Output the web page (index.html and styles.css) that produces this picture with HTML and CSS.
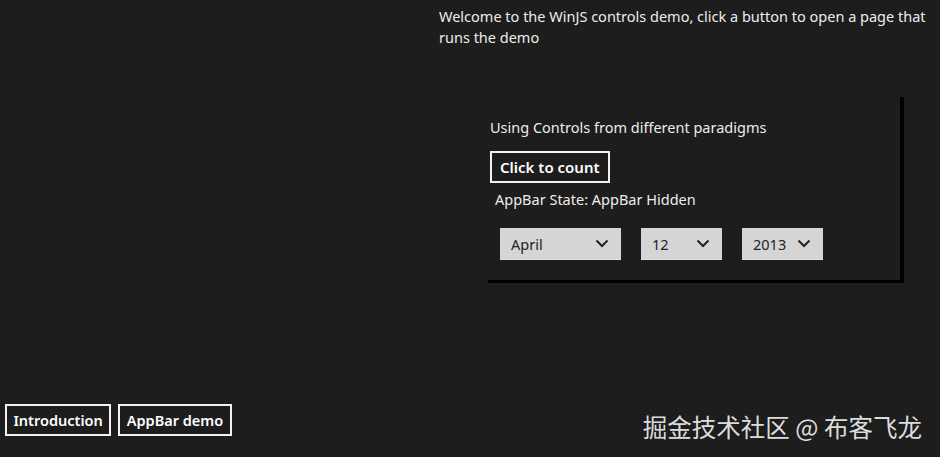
FILE: index.html
```html
<!DOCTYPE html>
<html lang="en">
<head>
  <meta charset="UTF-8" />
  <meta name="viewport" content="width=device-width, initial-scale=1.0"/>
  <title>WinJS Controls Demo</title>
  <link rel="stylesheet" href="styles.css">
</head>
<body>

  <div class="page">
    <main class="content">
      <p class="intro">Welcome to the WinJS controls demo, click a button to open a page that runs the demo</p>

      <section class="panel">
        <p class="panel-title">Using Controls from different paradigms</p>
        <button class="win-button">Click to count</button>
        <p class="state">AppBar State: AppBar Hidden</p>

        <div class="date-picker">
          <div class="select month">
            <span>April</span>
            <svg width="14" height="9" viewBox="0 0 14 9"><path d="M1.5 1.5 L7 7 L12.5 1.5" fill="none" stroke="#222" stroke-width="2"/></svg>
          </div>
          <div class="select">
            <span>12</span>
            <svg width="14" height="9" viewBox="0 0 14 9"><path d="M1.5 1.5 L7 7 L12.5 1.5" fill="none" stroke="#222" stroke-width="2"/></svg>
          </div>
          <div class="select">
            <span>2013</span>
            <svg width="14" height="9" viewBox="0 0 14 9"><path d="M1.5 1.5 L7 7 L12.5 1.5" fill="none" stroke="#222" stroke-width="2"/></svg>
          </div>
        </div>
      </section>
    </main>

    <footer class="appbar">
      <div class="nav">
        <button class="win-button">Introduction</button>
        <button class="win-button">AppBar demo</button>
      </div>
      <div class="watermark">掘金技术社区 @ 布客飞龙</div>
    </footer>
  </div>

</body>
</html>
```

FILE: styles.css
```css
body {
  margin: 0;
  background-color: #1d1d1d;
  color: #ececec;
  font-family: "Noto Sans", "Open Sans", sans-serif;
  font-size: 14.5px;
}

p {
  margin: 0;
}

.page {
  height: 457px;
  display: flex;
  flex-direction: column;
  overflow: hidden;
}

.content {
  flex: 1;
  padding: 6px 0 0 439px;
}

.intro {
  width: 495px;
  line-height: 21px;
}

.panel {
  width: 416px;
  height: 186px;
  margin: 46px 0 0 45px;
  padding: 23px 0 0 6px;
  box-sizing: border-box;
  background-color: #1d1d1d;
  box-shadow: 4px 3px 0 #000;
}

.panel-title {
  line-height: 20px;
}

.win-button {
  font-family: inherit;
  font-size: 15px;
  font-weight: 600;
  color: #fff;
  background: transparent;
  border: 2px solid #f2f2f2;
  height: 32px;
  padding: 0 8px;
  cursor: pointer;
}

.panel .win-button {
  margin-top: 14px;
}

.state {
  margin: 5px 0 0 5px;
  line-height: 22px;
}

.date-picker {
  display: flex;
  gap: 20px;
  margin: 18px 0 0 10px;
}

.select {
  width: 81px;
  height: 32px;
  box-sizing: border-box;
  padding: 0 12px 0 11px;
  display: flex;
  align-items: center;
  justify-content: space-between;
  background-color: #d5d5d5;
  color: #222;
  border-bottom: 1px dotted #f0f0f0;
}

.select.month {
  width: 121px;
}

.appbar {
  display: flex;
  align-items: flex-end;
  justify-content: space-between;
  padding: 0 18px 21px 5px;
}

.nav {
  display: flex;
  gap: 7px;
}

.nav .win-button {
  font-size: 14.5px;
  padding: 0 6.5px;
}

.watermark {
  font-family: "Noto Sans CJK SC", sans-serif;
  font-size: 24.5px;
  line-height: 24px;
  color: #dcdcdc;
  margin-bottom: -3px;
}
```
